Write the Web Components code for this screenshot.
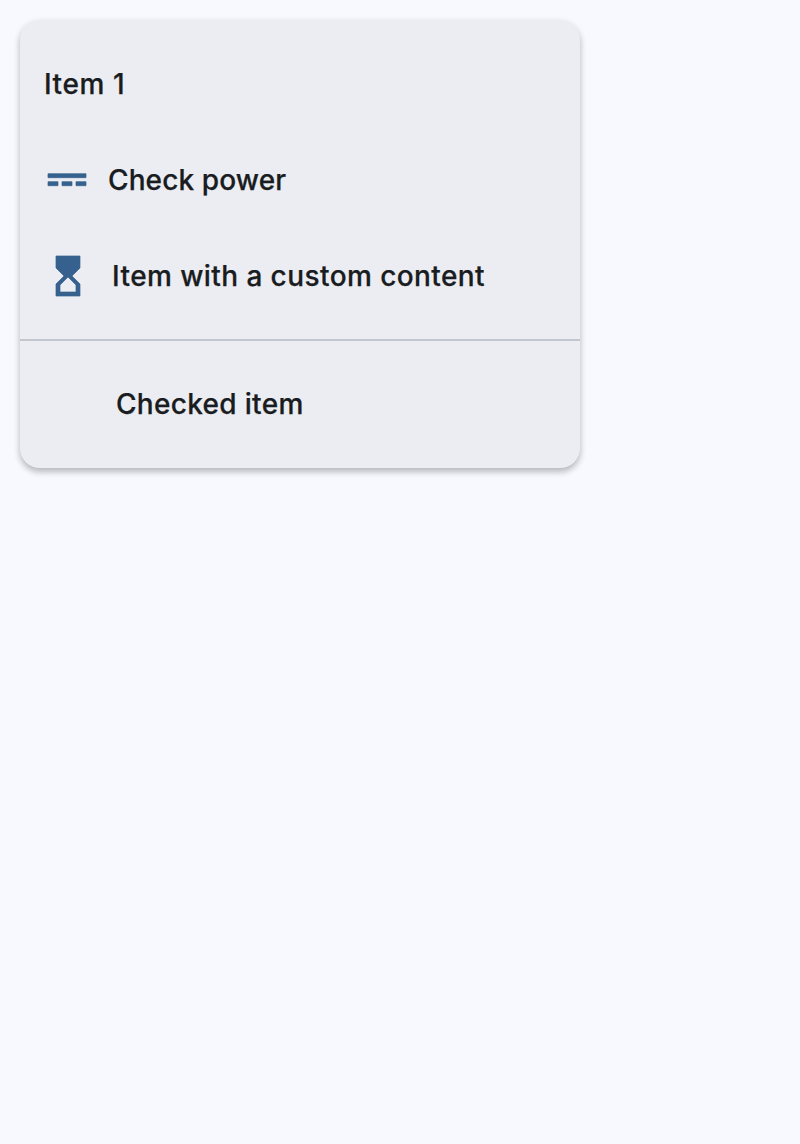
<!DOCTYPE html>
<html lang="en"><head><meta charset="utf-8"><title>Menu</title>
<style>
body{margin:0;background:#f8f9ff;font-family:Inter,"Liberation Sans",sans-serif;color:#191c20;padding:20px}
</style></head><body>
<popup-menu>
<menu-item style="--tracking:.56px">Item 1</menu-item>
<menu-item style="--gap:16px;--tracking:.12px"><menu-icon slot="icon" name="power"></menu-icon>Check power</menu-item>
<menu-item style="--gap:20px;--tracking:.42px"><menu-icon slot="icon" name="hourglass"></menu-icon>Item with a custom content</menu-item>
<menu-divider></menu-divider>
<menu-item style="--indent:72px;--tracking:.31px">Checked item</menu-item>
</popup-menu>
<script>
const define = (tag, html, setup) => customElements.define(tag, class extends HTMLElement {
  connectedCallback() {
    if (this.shadowRoot) return;
    this.attachShadow({mode: "open"}).innerHTML = html;
    if (setup) setup(this);
  }
});
define("popup-menu", `<style>:host{display:block;box-sizing:border-box;width:560px;height:448px;padding:16px 0;border-radius:20px;background:#ecedf2;box-shadow:0 4px 6px rgba(0,0,0,.22),0 2px 8px rgba(0,0,0,.07)}</style><slot></slot>`);
define("menu-item", `<style>:host{display:flex;align-items:center;box-sizing:border-box;height:96px;padding:0 24px 0 calc(24px + var(--indent,0px));gap:var(--gap,0px);font-size:28px;font-weight:500;letter-spacing:var(--tracking,.2px);line-height:40px;white-space:nowrap;-webkit-text-stroke:.25px currentColor}</style><slot name="icon"></slot><span><slot></slot></span>`);
define("menu-divider", `<style>:host{display:block;height:2px;margin:15px 0;background:#c2c7cf}</style>`);
define("menu-icon", `<style>:host{display:block;width:48px;height:48px;color:#36618e}svg{display:block;width:48px;height:48px;fill:currentColor;stroke:currentColor;stroke-width:.35}</style><svg viewBox="0 0 24 24"><path/></svg>`, el => {
  const paths = {
    power: "M2 8.85v2h19v-2H2zm0 6h5v-2H2v2zm7 0h5v-2H9v2zm7 0h5v-2h-5v2z",
    hourglass: "M18 22l-.01-6L14 12l3.99-4.01L18 2H6v6l4 4-4 3.99V22h12zM8 16.5l4-4 4 4V20H8v-3.5z"
  };
  el.shadowRoot.querySelector("path").setAttribute("d", paths[el.getAttribute("name")]);
});
</script></body></html>
